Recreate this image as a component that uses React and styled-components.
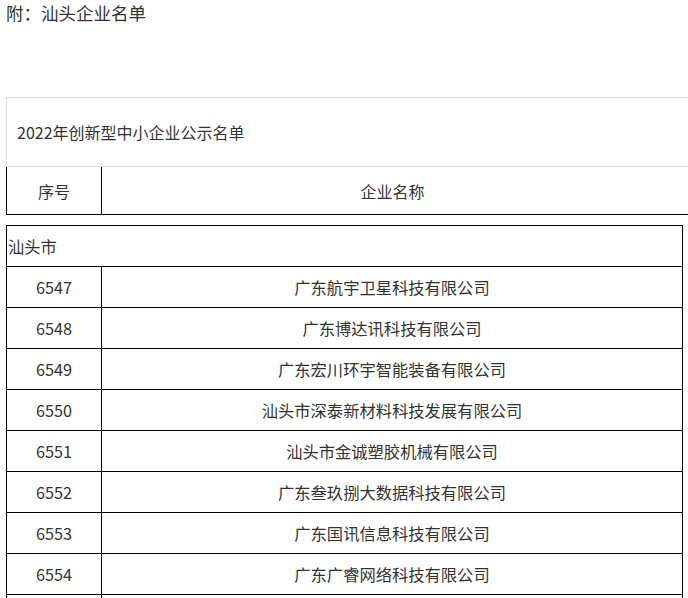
import React from "react";
import styled, { createGlobalStyle } from "styled-components";

const Global = createGlobalStyle`
  html, body { margin: 0; padding: 0; background: #fff; }
  body { font-family: "Noto Sans CJK SC", "Noto Sans", sans-serif; color: #333; }
`;

const Page = styled.div`
  width: 688px;
  height: 598px;
  overflow: hidden;
  padding-left: 6px;
  box-sizing: border-box;
`;

const Heading = styled.div`
  font-size: 17.5px;
  line-height: 26px;
  height: 26px;
  margin-bottom: 71px;
`;

const TitleBox = styled.div`
  width: 677px;
  height: 68px;
  border-top: 1px solid #ddd;
  border-left: 1px solid #ddd;
  border-bottom: 1px solid #ddd;
  display: flex;
  align-items: center;
  padding-left: 10px;
  font-size: 16px;
  box-sizing: content-box;
`;

const HeaderRow = styled.div`
  width: 700px;
  height: 47px;
  border-left: 1px solid #000;
  border-bottom: 1px solid #000;
  display: grid;
  grid-template-columns: 95px 581px 1fr;
  font-size: 16px;
`;

const HeadCell = styled.div`
  display: flex;
  align-items: center;
  justify-content: center;
  border-right: ${(p) => (p.$divider ? "1px solid #000" : "none")};
`;

const Table = styled.div`
  margin-top: 10px;
  width: 675px;
  border: 1px solid #000;
  font-size: 16.3px;
`;

const GroupRow = styled.div`
  height: 40px;
  display: flex;
  align-items: center;
  padding-left: 1px;
  border-bottom: 1px solid #000;
`;

const Row = styled.div`
  height: 40px;
  display: grid;
  grid-template-columns: 95px 1fr;
  border-bottom: 1px solid #000;
`;

const Cell = styled.div`
  display: flex;
  align-items: center;
  justify-content: center;
  border-right: ${(p) => (p.$divider ? "1px solid #000" : "none")};
`;

const rows = [
  ["6547", "广东航宇卫星科技有限公司"],
  ["6548", "广东博达讯科技有限公司"],
  ["6549", "广东宏川环宇智能装备有限公司"],
  ["6550", "汕头市深泰新材料科技发展有限公司"],
  ["6551", "汕头市金诚塑胶机械有限公司"],
  ["6552", "广东叁玖捌大数据科技有限公司"],
  ["6553", "广东国讯信息科技有限公司"],
  ["6554", "广东广睿网络科技有限公司"],
  ["", ""],
];

export default function App() {
  return (
    <>
      <Global />
      <Page>
        <Heading>附：汕头企业名单</Heading>
        <TitleBox>2022年创新型中小企业公示名单</TitleBox>
        <HeaderRow>
          <HeadCell $divider>序号</HeadCell>
          <HeadCell>企业名称</HeadCell>
          <HeadCell />
        </HeaderRow>
        <Table>
          <GroupRow>汕头市</GroupRow>
          {rows.map(([n, name], i) => (
            <Row key={i}>
              <Cell $divider>{n}</Cell>
              <Cell>{name}</Cell>
            </Row>
          ))}
        </Table>
      </Page>
    </>
  );
}
